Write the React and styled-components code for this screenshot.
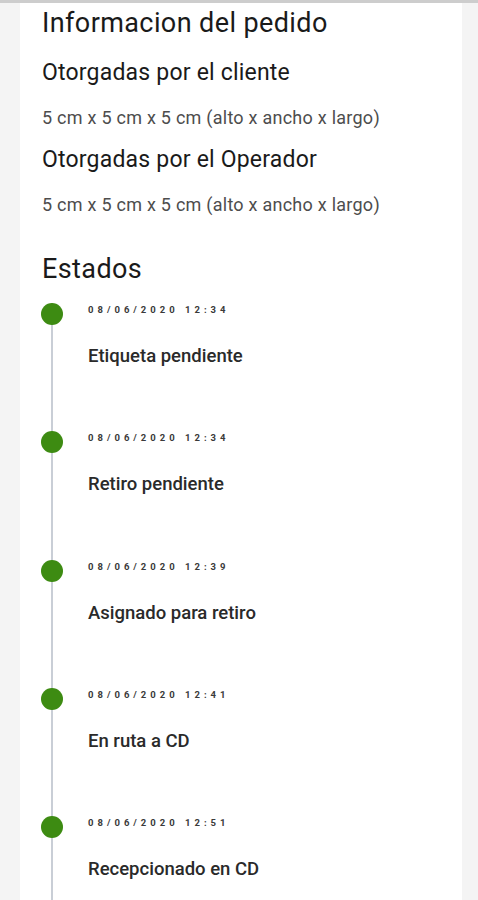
import React from "react";
import styled, { createGlobalStyle } from "styled-components";

const Global = createGlobalStyle`
  html, body { margin: 0; padding: 0; background: #f4f4f4; }
  body { font-family: Roboto, "Noto Sans", sans-serif; color: #1f1f1f; }
`;

const Page = styled.div`
  height: 900px;
  overflow: hidden;
  background: #f4f4f4;
  border-top: 3px solid #cdcdcd;
  box-sizing: border-box;
`;

const Card = styled.div`
  margin: 0 16px 0 20px;
  background: #ffffff;
  padding: 3px 22px 0 22px;
  height: 100%;
  box-sizing: border-box;
`;

const Title = styled.h2`
  margin: ${(p) => p.$mt || 0}px 0 0 0;
  font-size: 27px;
  font-weight: 400;
  letter-spacing: 0.4px;
  line-height: 34px;
  color: #1a1a1a;
`;

const SubTitle = styled.h3`
  margin: ${(p) => p.$mt}px 0 0 0;
  font-size: 23px;
  font-weight: 400;
  letter-spacing: 0.2px;
  line-height: 30px;
  color: #1a1a1a;
`;

const Dims = styled.p`
  margin: 18px 0 0 0;
  font-size: 18px;
  letter-spacing: 0.25px;
  line-height: 24px;
  color: #4d4d4d;
`;

const Timeline = styled.ul`
  list-style: none;
  margin: 17px 0 0 0;
  padding: 0;
`;

const Item = styled.li`
  display: grid;
  grid-template-columns: 46px 1fr;
  height: 128.25px;
`;

const Rail = styled.div`
  position: relative;
`;

const Line = styled.span`
  position: absolute;
  left: 9px;
  top: 0;
  bottom: 0;
  width: 2px;
  background: #c9ced6;
`;

const Dot = styled.span`
  position: absolute;
  left: -1px;
  top: 0;
  width: 22px;
  height: 22px;
  border-radius: 50%;
  background: #3d8b12;
`;

const Body = styled.div`
  display: flex;
  flex-direction: column;
`;

const Stamp = styled.span`
  font-size: 9.5px;
  font-weight: 700;
  letter-spacing: 4px;
  color: #3a3a3a;
  line-height: 12px;
  margin-top: 1px;
`;

const Label = styled.span`
  margin-top: 28px;
  font-size: 18.5px;
  font-weight: 500;
  color: #2a2a2a;
  line-height: 24px;
`;

const states = [
  { date: "08/06/2020 12:34", label: "Etiqueta pendiente" },
  { date: "08/06/2020 12:34", label: "Retiro pendiente" },
  { date: "08/06/2020 12:39", label: "Asignado para retiro" },
  { date: "08/06/2020 12:41", label: "En ruta a CD" },
  { date: "08/06/2020 12:51", label: "Recepcionado en CD" },
];

export default function App() {
  return (
    <>
      <Global />
      <Page>
        <Card>
          <Title>Informacion del pedido</Title>
          <SubTitle $mt={18}>Otorgadas por el cliente</SubTitle>
          <Dims>5 cm x 5 cm x 5 cm (alto x ancho x largo)</Dims>
          <SubTitle $mt={15}>Otorgadas por el Operador</SubTitle>
          <Dims>5 cm x 5 cm x 5 cm (alto x ancho x largo)</Dims>
          <Title $mt={35}>Estados</Title>
          <Timeline>
            {states.map((s, i) => (
              <Item key={i}>
                <Rail>
                  <Line />
                  <Dot />
                </Rail>
                <Body>
                  <Stamp>{s.date}</Stamp>
                  <Label>{s.label}</Label>
                </Body>
              </Item>
            ))}
          </Timeline>
        </Card>
      </Page>
    </>
  );
}
